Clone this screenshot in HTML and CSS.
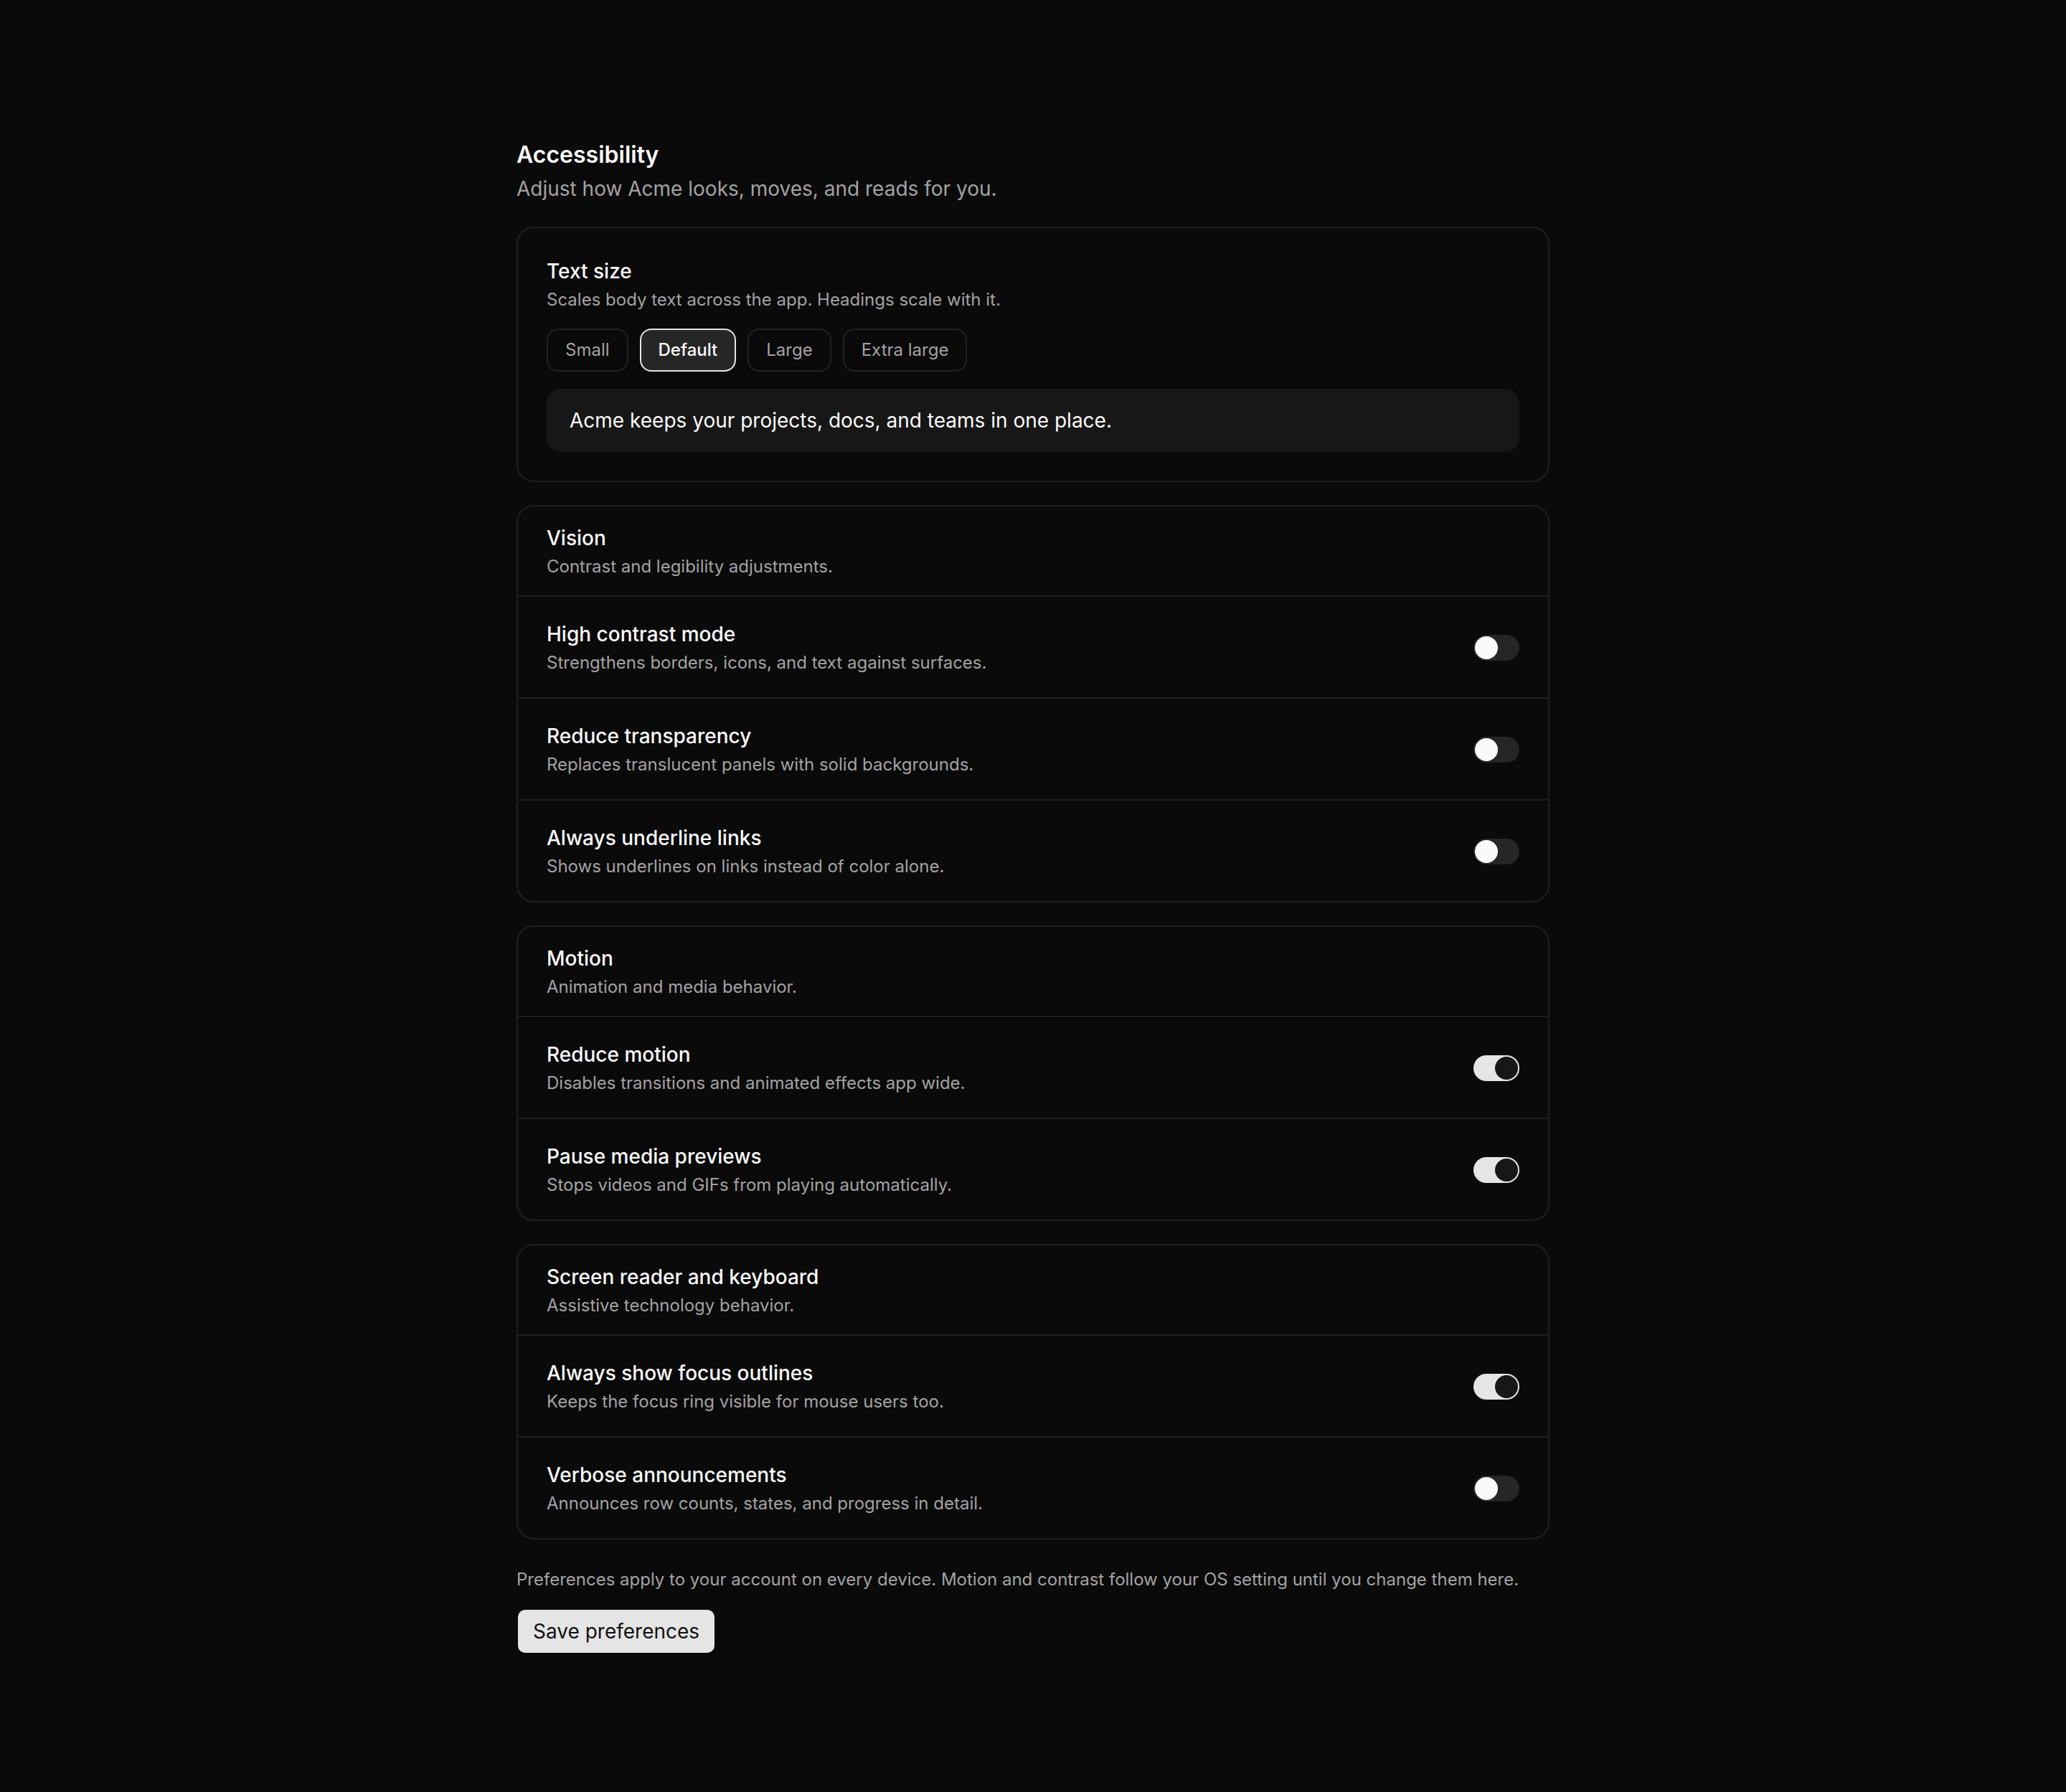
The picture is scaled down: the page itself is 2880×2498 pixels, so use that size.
FILE: index.html
```html
<!DOCTYPE html>
<html lang="en">
<head>
    <meta charset="UTF-8">
    <meta name="viewport" content="width=device-width, initial-scale=1.0">
    <title>Accessibility settings</title>
    <link rel="stylesheet" href="styles.css">
</head>
<body>
    <main class="page">
        <header class="page-head">
            <h1>Accessibility</h1>
            <p>Adjust how Acme looks, moves, and reads for you.</p>
        </header>

        <section class="card card-body">
            <h2 class="item-title">Text size</h2>
            <p class="item-desc">Scales body text across the app. Headings scale with it.</p>
            <div class="sizes">
                <button class="size">Small</button>
                <button class="size active">Default</button>
                <button class="size">Large</button>
                <button class="size">Extra large</button>
            </div>
            <div class="preview">Acme keeps your projects, docs, and teams in one place.</div>
        </section>

        <section class="card">
            <div class="card-head">
                <h2 class="item-title">Vision</h2>
                <p class="item-desc">Contrast and legibility adjustments.</p>
            </div>
            <div class="row">
                <div>
                    <h3 class="item-title">High contrast mode</h3>
                    <p class="item-desc">Strengthens borders, icons, and text against surfaces.</p>
                </div>
                <button class="switch" role="switch" aria-checked="false"><span class="knob"></span></button>
            </div>
            <div class="row">
                <div>
                    <h3 class="item-title">Reduce transparency</h3>
                    <p class="item-desc">Replaces translucent panels with solid backgrounds.</p>
                </div>
                <button class="switch" role="switch" aria-checked="false"><span class="knob"></span></button>
            </div>
            <div class="row">
                <div>
                    <h3 class="item-title">Always underline links</h3>
                    <p class="item-desc">Shows underlines on links instead of color alone.</p>
                </div>
                <button class="switch" role="switch" aria-checked="false"><span class="knob"></span></button>
            </div>
        </section>

        <section class="card">
            <div class="card-head">
                <h2 class="item-title">Motion</h2>
                <p class="item-desc">Animation and media behavior.</p>
            </div>
            <div class="row">
                <div>
                    <h3 class="item-title">Reduce motion</h3>
                    <p class="item-desc">Disables transitions and animated effects app wide.</p>
                </div>
                <button class="switch on" role="switch" aria-checked="true"><span class="knob"></span></button>
            </div>
            <div class="row">
                <div>
                    <h3 class="item-title">Pause media previews</h3>
                    <p class="item-desc">Stops videos and GIFs from playing automatically.</p>
                </div>
                <button class="switch on" role="switch" aria-checked="true"><span class="knob"></span></button>
            </div>
        </section>

        <section class="card">
            <div class="card-head">
                <h2 class="item-title">Screen reader and keyboard</h2>
                <p class="item-desc">Assistive technology behavior.</p>
            </div>
            <div class="row">
                <div>
                    <h3 class="item-title">Always show focus outlines</h3>
                    <p class="item-desc">Keeps the focus ring visible for mouse users too.</p>
                </div>
                <button class="switch on" role="switch" aria-checked="true"><span class="knob"></span></button>
            </div>
            <div class="row">
                <div>
                    <h3 class="item-title">Verbose announcements</h3>
                    <p class="item-desc">Announces row counts, states, and progress in detail.</p>
                </div>
                <button class="switch" role="switch" aria-checked="false"><span class="knob"></span></button>
            </div>
        </section>

        <p class="footnote">Preferences apply to your account on every device. Motion and contrast follow your OS setting until you change them here.</p>
        <button class="save">Save preferences</button>
    </main>
</body>
</html>
```

FILE: styles.css
```css
html {
    background-color: #0a0a0a;
}
body {
    margin: 0;
    font-family: Inter, "Noto Sans", sans-serif;
    color: #fafafa;
    background-color: #0a0a0a;
}
.page {
    max-width: 1440px;
    margin: 0 auto;
    padding: 196px 0 96px;
}
.page-head h1 {
    font-size: 32px;
    line-height: 40px;
    font-weight: 600;
    margin: 0;
}
.page-head p {
    font-size: 28px;
    line-height: 42px;
    color: #a3a3a3;
    margin: 6px 0 0;
}
.card {
    border: 2px solid #1f1f1f;
    border-radius: 24px;
    margin-top: 32px;
}
.card-body {
    padding: 40px;
}
.item-title {
    font-size: 28px;
    line-height: 40px;
    font-weight: 500;
    margin: 0;
}
.item-desc {
    font-size: 24px;
    line-height: 36px;
    color: #a3a3a3;
    margin: 2px 0 0;
}
.sizes {
    display: flex;
    gap: 16px;
    margin-top: 22px;
}
.size {
    font-family: inherit;
    font-size: 24px;
    line-height: 36px;
    padding: 10px 24px;
    color: #a3a3a3;
    background: transparent;
    border: 2px solid #222;
    border-radius: 16px;
}
.size.active {
    color: #fafafa;
    font-weight: 500;
    background-color: #262626;
    border-color: #e5e5e5;
}
.preview {
    margin-top: 24px;
    padding: 20px 32px;
    font-size: 28px;
    line-height: 48px;
    background-color: #171717;
    border-radius: 20px;
}
.card-head {
    padding: 24px 40px 22px;
    border-bottom: 2px solid #1f1f1f;
}
.row {
    display: flex;
    justify-content: space-between;
    align-items: center;
    padding: 32px 40px 30px;
    border-bottom: 2px solid #1f1f1f;
}
.row:last-child {
    border-bottom: none;
}
.switch {
    display: flex;
    width: 64px;
    height: 36px;
    padding: 2px;
    border: none;
    border-radius: 18px;
    background-color: #262626;
}
.knob {
    width: 32px;
    height: 32px;
    border-radius: 50%;
    background-color: #fafafa;
}
.switch.on {
    justify-content: flex-end;
    background-color: #e5e5e5;
}
.switch.on .knob {
    background-color: #171717;
}
.footnote {
    font-size: 24px;
    line-height: 36px;
    color: #a3a3a3;
    margin: 38px 0 24px;
}
.save {
    font-family: inherit;
    font-size: 28px;
    line-height: 40px;
    margin-left: 2px;
    padding: 10px 21px;
    color: #111;
    background-color: #e5e5e5;
    border: none;
    border-radius: 10px;
}
```
